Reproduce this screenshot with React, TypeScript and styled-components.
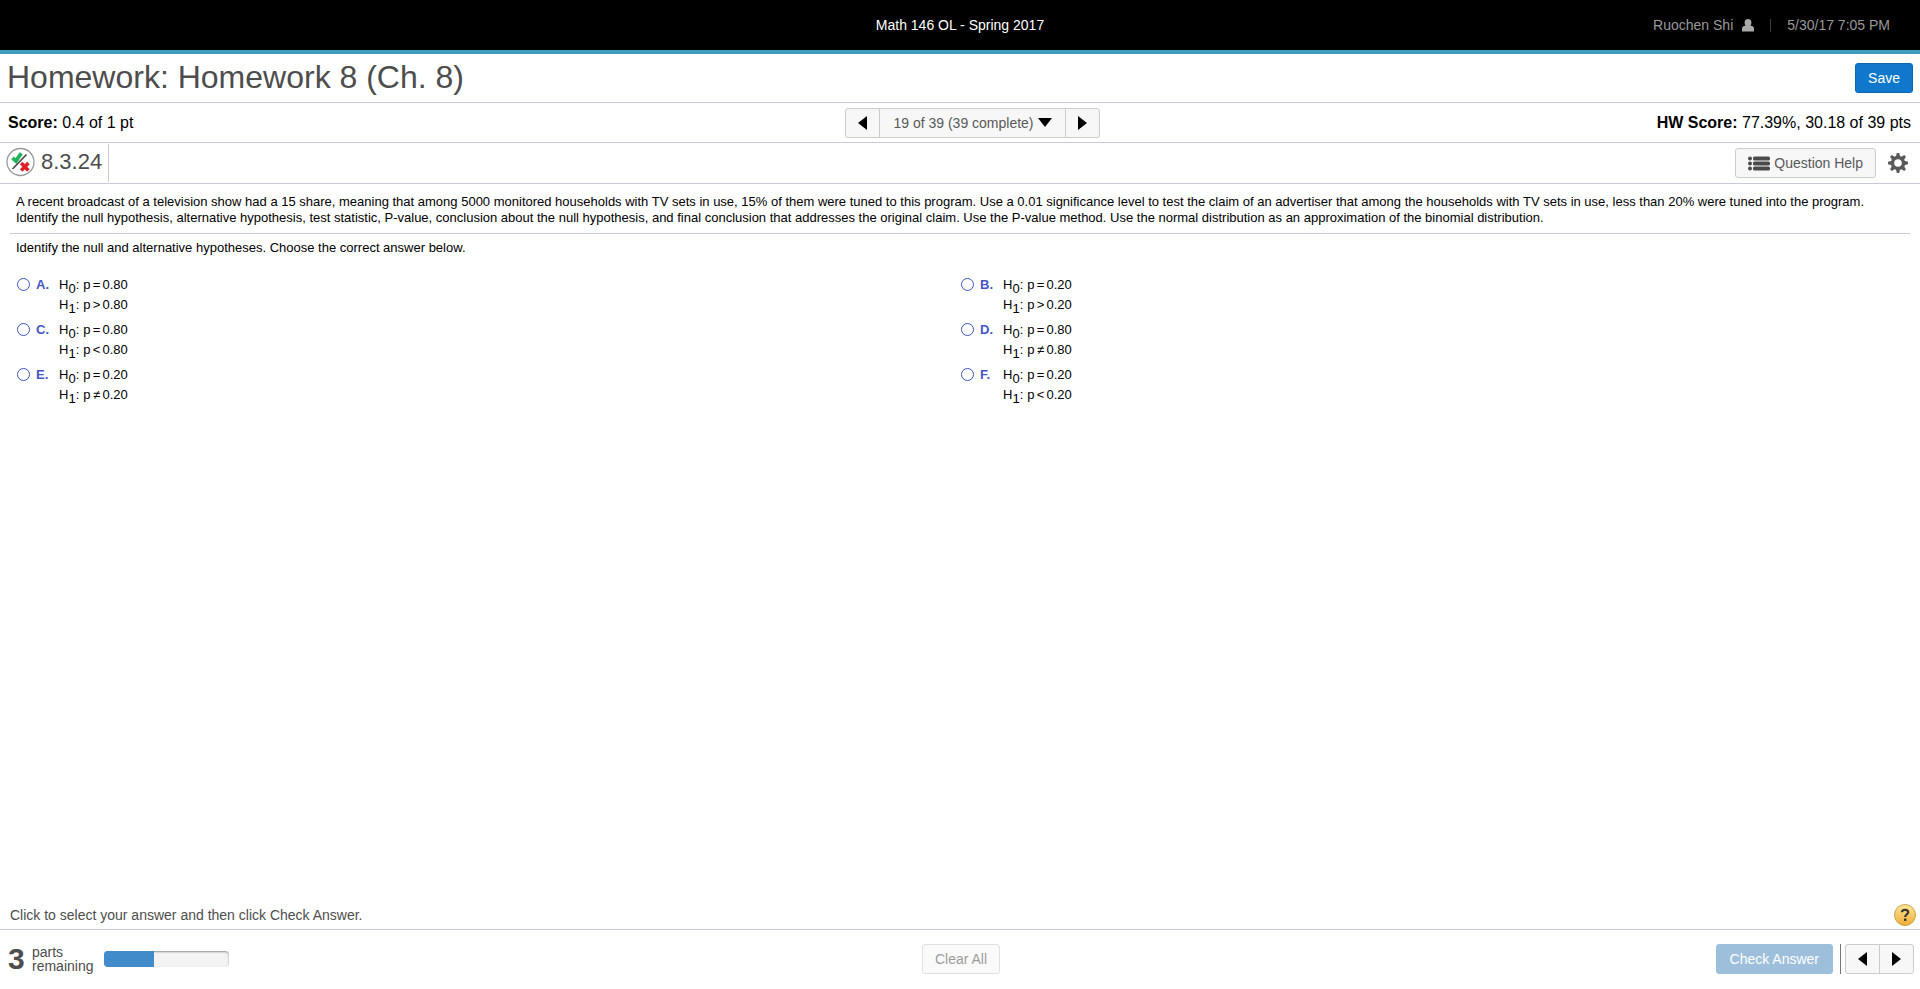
import React from "react";
import styled, { createGlobalStyle } from "styled-components";

const LINE = "#c5cad9";

const GlobalStyle = createGlobalStyle`
  *, *::before, *::after { box-sizing: border-box; }
  body {
    margin: 0;
    background: #fff;
    color: #000;
    font-family: "Liberation Sans", Arial, sans-serif;
    font-size: 14px;
  }
  button, select { font: inherit; }
`;

const Page = styled.div`
  display: flex;
  flex-direction: column;
  min-height: 100vh;
`;

const ThreeColumns = styled.div`
  display: grid;
  grid-template-columns: 1fr auto 1fr;
  align-items: center;
`;

const TopBar = styled(ThreeColumns).attrs({ as: "header" })`
  height: 54px;
  padding: 0 30px;
  background: #000;
  border-bottom: 4px solid #409fbf;
  color: #999;
`;

const CourseName = styled.div`
  grid-column: 2;
  color: #fff;
`;

const Account = styled.div`
  display: flex;
  align-items: center;
  justify-content: flex-end;
`;

const UserIcon = styled.svg`
  margin: 0 16px 0 9px;
`;

const Separator = styled.span`
  width: 1px;
  height: 13px;
  margin-right: 16px;
  background: #443a33;
`;

const TitleBar = styled.div`
  display: flex;
  align-items: center;
  justify-content: space-between;
  height: 49px;
  padding: 0 7px;
  border-bottom: 1px solid ${LINE};
`;

const Title = styled.h1`
  margin: 0;
  padding-bottom: 2px;
  color: #4d4d4d;
  font-size: 32px;
  font-weight: 400;
  line-height: 44px;
`;

const ScoreBar = styled(ThreeColumns)`
  height: 40px;
  padding: 0 9px 0 8px;
  border-bottom: 1px solid ${LINE};
  font-size: 16px;
`;

const HomeworkScore = styled.div`
  text-align: right;
`;

const Button = styled.button<{ $tone?: "plain" | "primary" | "faded" }>`
  display: inline-flex;
  align-items: center;
  justify-content: center;
  gap: 4px;
  height: 30px;
  padding: 0 12px;
  border: 1px solid
    ${(p) => (p.$tone === "primary" ? "#0b66b0" : p.$tone === "faded" ? "#9dbfdb" : "#ccc")};
  border-radius: 3px;
  background: ${(p) =>
    p.$tone === "primary" ? "#0f78cc" : p.$tone === "faded" ? "#9dbfdb" : "#f7f7f7"};
  color: ${(p) => (p.$tone === "primary" || p.$tone === "faded" ? "#fff" : "#595959")};
  font-size: 14px;
  white-space: nowrap;

  &:disabled { opacity: ${(p) => (p.$tone === "faded" ? 1 : 0.6)}; }
`;

const WideButton = styled(Button)`
  padding: 0 13px;
`;

const ButtonGroup = styled.div`
  display: flex;

  > * + * { margin-left: -1px; }
  > *:not(:first-child) { border-top-left-radius: 0; border-bottom-left-radius: 0; }
  > *:not(:last-child) { border-top-right-radius: 0; border-bottom-right-radius: 0; }
`;

const ArrowButton = styled(Button)`
  width: 35px;
  padding: 0;
`;

const Pager = styled(ButtonGroup)`
  margin-left: 26px;
`;

const SectionBar = styled.div`
  display: flex;
  align-items: center;
  gap: 12px;
  height: 41px;
  padding: 0 12px 0 6px;
  border-bottom: 1px solid ${LINE};
`;

const SectionName = styled.h2`
  display: flex;
  align-items: center;
  gap: 6px;
  height: 38px;
  margin: 0 auto 0 0;
  padding: 0 6px 2px 0;
  border-right: 1px solid ${LINE};
  color: #4d4d4d;
  font-size: 22px;
  font-weight: 400;
`;

const IconButton = styled.button`
  display: flex;
  padding: 0;
  border: 0;
  background: none;
`;

const Main = styled.main`
  flex: 1;
  padding: 8px 10px;
  font-size: 13px;
  line-height: 16px;
`;

const Problem = styled.p`
  margin: 0;
  padding: 2px 6px 7px;
  border-bottom: 1px solid ${LINE};
`;

const Prompt = styled.p`
  margin: 0;
  padding: 6px 6px 19px;
`;

const Choices = styled.fieldset`
  display: grid;
  grid-template-columns: 1fr 1fr;
  row-gap: 5px;
  margin: 0;
  padding: 0 6px;
  border: 0;
`;

const Choice = styled.label`
  display: grid;
  grid-template-columns: 20px 23px auto;
  justify-content: start;
  line-height: 20px;
`;

const Radio = styled.input`
  appearance: none;
  width: 13px;
  height: 13px;
  margin: 3px 1px;
  border: 1px solid #3c55c8;
  border-radius: 50%;
  background: #fff;

  &:checked { background: #3c55c8; box-shadow: inset 0 0 0 2px #fff; }
`;

const Letter = styled.span`
  color: #4457c8;
  font-weight: 700;
`;

const Hypothesis = styled.div`
  display: flex;
  height: 20px;
`;

const Subscript = styled.sub`
  font-size: 13px;
  line-height: 28px;
  vertical-align: baseline;
`;

const Relation = styled.span`
  width: 12px;
  text-align: center;
`;

const Variable = styled.span`
  margin-left: 4px;
`;

const HintBar = styled.div`
  display: flex;
  align-items: center;
  justify-content: space-between;
  height: 30px;
  padding: 0 3px 0 10px;
  border-bottom: 1px solid ${LINE};
  color: #4d4d4d;
`;

const Footer = styled(ThreeColumns).attrs({ as: "footer" })`
  height: 59px;
  padding: 0 6px 1px 8px;
  color: #4d4d4d;
`;

const Remaining = styled.div`
  display: flex;
  align-items: center;
`;

const Count = styled.strong`
  width: 24px;
  font-size: 30px;
  line-height: 32px;
`;

const CountLabel = styled.span`
  width: 72px;
  line-height: 14px;
`;

const Track = styled.div`
  width: 125px;
  height: 16px;
  overflow: hidden;
  border-radius: 4px;
  background: #f3f3f3;
  box-shadow: inset 0 1px 2px rgba(0, 0, 0, 0.4);
`;

const Fill = styled.div`
  height: 100%;
  background: #428bca;
`;

const Actions = styled.div`
  display: flex;
  justify-content: flex-end;
`;

const Rule = styled.span`
  width: 1px;
  margin: 0 4px 0 7px;
  background: #777;
`;

function Arrow({ direction }: { direction: "left" | "right" | "down" }) {
  if (direction === "down") {
    return (
      <svg width="14" height="9" viewBox="0 0 14 9" aria-hidden="true">
        <path d="M0 0H14L7 9Z" />
      </svg>
    );
  }
  return (
    <svg width="9" height="14" viewBox="0 0 9 14" fill="#000" aria-hidden="true">
      <path d={direction === "left" ? "M9 0V14L0 7Z" : "M0 0V14L9 7Z"} />
    </svg>
  );
}

function PartialCreditIcon() {
  return (
    <svg width="29" height="30" viewBox="0 0 29 30" aria-hidden="true">
      <circle cx="14.5" cy="15" r="13.5" fill="#fff" stroke="#999" strokeWidth="1.3" />
      <path d="M6.5 22L20.5 7.5" stroke="#444" strokeWidth="1.6" />
      <path d="M6.5 10.8L10 14L15.2 6.2" fill="none" stroke="#22b25a" strokeWidth="3.8" />
      <path d="M15.2 16L22.4 23.4M22.4 16L15.2 23.4" stroke="#e0202b" strokeWidth="3.6" />
    </svg>
  );
}

function GearIcon() {
  return (
    <svg width="20" height="20" viewBox="0 0 20 20" fill="#595959" aria-hidden="true">
      {[0, 45, 90, 135].map((a) => (
        <path key={a} d="M8.8 0H11.2L12.2 4V16L11.2 20H8.8L7.8 16V4Z" transform={`rotate(${a} 10 10)`} />
      ))}
      <circle cx="10" cy="10" r="7.2" />
      <circle cx="10" cy="10" r="3.8" fill="#fff" />
    </svg>
  );
}

function ListIcon() {
  return (
    <svg width="22" height="15" viewBox="0 0 22 15" fill="#4a4a4a" aria-hidden="true">
      {[2, 7, 12].map((y) => (
        <g key={y}>
          <circle cx="2" cy={y + 0.5} r="2" />
          <rect x="5" y={y - 1.5} width="17" height="4" rx="1.5" />
        </g>
      ))}
    </svg>
  );
}

function HelpIcon() {
  return (
    <svg width="24" height="24" viewBox="0 0 24 24" aria-hidden="true">
      <defs>
        <linearGradient id="gold" x1="0" y1="0" x2="0" y2="1">
          <stop offset="0" stopColor="#fde79a" />
          <stop offset="1" stopColor="#f0ac35" />
        </linearGradient>
      </defs>
      <circle cx="12" cy="12" r="10.5" fill="url(#gold)" stroke="#cda24c" />
      <path d="M9 9.2C9 6 15.2 6 15.2 9.2C15.2 11.3 12.2 11.3 12.2 14" fill="none" stroke="#3a3730" strokeWidth="2.2" />
      <rect x="11" y="15.5" width="2.4" height="2.4" fill="#3a3730" />
    </svg>
  );
}

const choices = [
  { letter: "A", nul: ["=", "0.80"], alt: [">", "0.80"] },
  { letter: "B", nul: ["=", "0.20"], alt: [">", "0.20"] },
  { letter: "C", nul: ["=", "0.80"], alt: ["<", "0.80"] },
  { letter: "D", nul: ["=", "0.80"], alt: ["≠", "0.80"] },
  { letter: "E", nul: ["=", "0.20"], alt: ["≠", "0.20"] },
  { letter: "F", nul: ["=", "0.20"], alt: ["<", "0.20"] },
];

function Statement({ index, parts }: { index: number; parts: string[] }) {
  return (
    <Hypothesis>
      <span>H</span>
      <Subscript>{index}</Subscript>
      <span>:</span>
      <Variable>p</Variable>
      <Relation>{parts[0]}</Relation>
      <span>{parts[1]}</span>
    </Hypothesis>
  );
}

export default function App() {
  return (
    <Page>
      <GlobalStyle />
      <TopBar>
        <CourseName>Math 146 OL - Spring 2017</CourseName>
        <Account>
          <span>Ruochen Shi</span>
          <UserIcon width="12" height="13" viewBox="0 0 12 13" fill="#aaa" aria-hidden="true">
            <ellipse cx="6" cy="3.7" rx="3.4" ry="3.7" />
            <path d="M0 12.5V9.5C0 7.8 1.5 7 3.5 6.6H8.5C10.5 7 12 7.8 12 9.5V12.5Z" />
          </UserIcon>
          <Separator />
          <span>5/30/17 7:05 PM</span>
        </Account>
      </TopBar>
      <TitleBar>
        <Title>Homework: Homework 8 (Ch. 8)</Title>
        <Button $tone="primary">Save</Button>
      </TitleBar>
      <ScoreBar>
        <div><strong>Score:</strong> 0.4 of 1 pt</div>
        <Pager>
          <ArrowButton aria-label="Previous question"><Arrow direction="left" /></ArrowButton>
          <WideButton>19 of 39 (39 complete) <Arrow direction="down" /></WideButton>
          <ArrowButton aria-label="Next question"><Arrow direction="right" /></ArrowButton>
        </Pager>
        <HomeworkScore><strong>HW Score:</strong> 77.39%, 30.18 of 39 pts</HomeworkScore>
      </ScoreBar>
      <SectionBar>
        <SectionName><PartialCreditIcon />8.3.24</SectionName>
        <Button><ListIcon />Question Help</Button>
        <IconButton aria-label="Settings"><GearIcon /></IconButton>
      </SectionBar>
      <Main>
        <Problem>
          A recent broadcast of a television show had a 15 share, meaning that among 5000 monitored households with TV sets in use, 15% of them were tuned to this program. Use a 0.01 significance level to test the claim of an advertiser that among the households with TV sets in use, less than 20% were tuned into the program. Identify the null hypothesis, alternative hypothesis, test statistic, P-value, conclusion about the null hypothesis, and final conclusion that addresses the original claim. Use the P-value method. Use the normal distribution as an approximation of the binomial distribution.
        </Problem>
        <Prompt>Identify the null and alternative hypotheses. Choose the correct answer below.</Prompt>
        <Choices aria-label="Null and alternative hypotheses">
          {choices.map((c) => (
            <Choice key={c.letter}>
              <Radio type="radio" name="hypotheses" value={c.letter} />
              <Letter>{c.letter}.</Letter>
              <div>
                <Statement index={0} parts={c.nul} />
                <Statement index={1} parts={c.alt} />
              </div>
            </Choice>
          ))}
        </Choices>
      </Main>
      <HintBar>
        Click to select your answer and then click Check Answer.
        <IconButton aria-label="Help"><HelpIcon /></IconButton>
      </HintBar>
      <Footer>
        <Remaining>
          <Count>3</Count>
          <CountLabel>parts remaining</CountLabel>
          <Track role="progressbar" aria-label="Progress" aria-valuenow={40}>
            <Fill style={{ width: "40%" }} />
          </Track>
        </Remaining>
        <Button disabled>Clear All</Button>
        <Actions>
          <WideButton $tone="faded" disabled>Check Answer</WideButton>
          <Rule />
          <ButtonGroup>
            <ArrowButton aria-label="Previous part"><Arrow direction="left" /></ArrowButton>
            <ArrowButton aria-label="Next part"><Arrow direction="right" /></ArrowButton>
          </ButtonGroup>
        </Actions>
      </Footer>
    </Page>
  );
}
